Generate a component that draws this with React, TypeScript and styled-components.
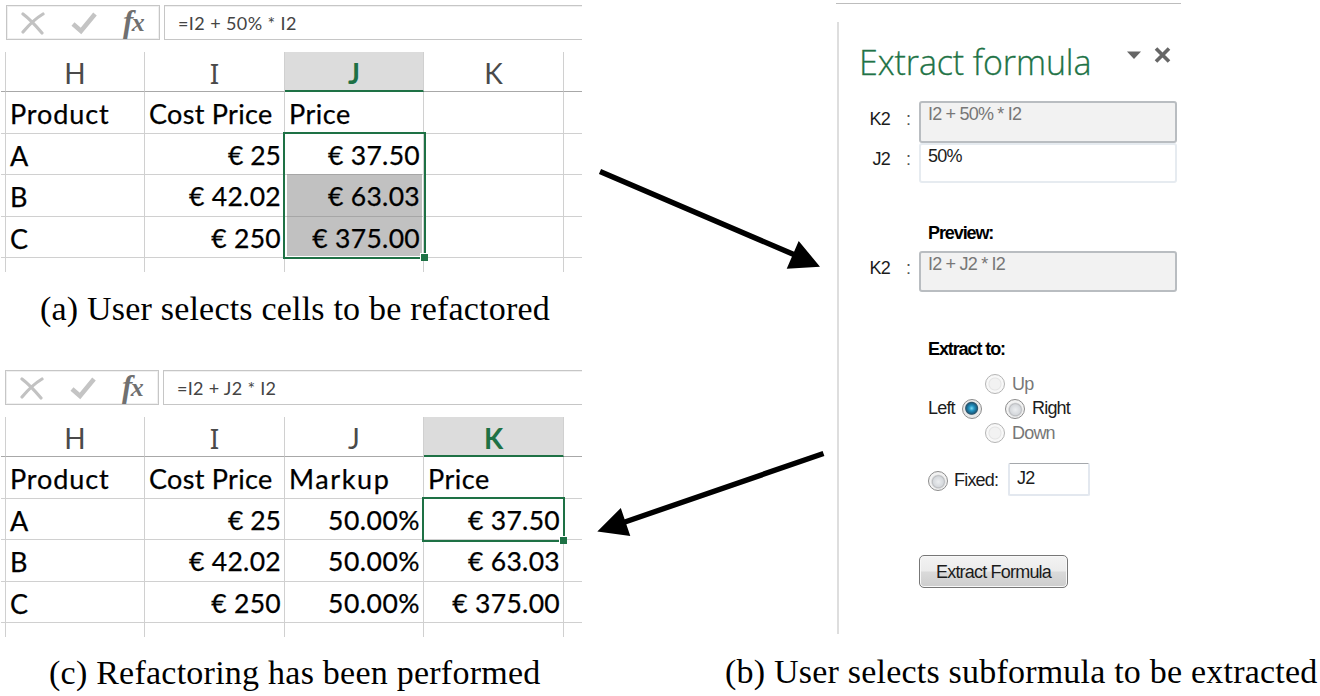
import React from "react";
import styled, { createGlobalStyle } from "styled-components";

const GlobalStyle = createGlobalStyle`
  *, *::before, *::after { box-sizing: border-box; }
  body { margin: 0; background: #fff; }
`;

const green = "#1e7145";

const Figure = styled.main`
  position: relative;
  display: grid;
  grid-template-columns: 582px 738px;
  width: 1320px;
  height: 696px;
  overflow: hidden;
  background: #fff;
  color: #000;
`;

const LeftColumn = styled.div`
  display: flex;
  flex-direction: column;
`;

const Caption = styled.p<{ $left: number; $top: number; $spacing: number }>`
  margin: ${(p) => p.$top}px 0 0 ${(p) => p.$left}px;
  font-family: "Liberation Serif", serif;
  font-size: 34px;
  line-height: 38px;
  letter-spacing: ${(p) => p.$spacing}px;
  white-space: nowrap;
`;

/* Spreadsheet */

const Sheet = styled.section<{ $top: number }>`
  margin-top: ${(p) => p.$top}px;
  font-family: Lato, sans-serif;
`;

const FormulaBar = styled.div<{ $left: number }>`
  display: flex;
  gap: 4px;
  height: 35px;
  margin-left: ${(p) => p.$left}px;
`;

const FormulaTools = styled.div`
  display: flex;
  align-items: center;
  width: 154px;
  border: 1px solid #c6c6c6;
  box-shadow: inset 0 0 0 1px #f0f0f0;
  padding-left: 13px;
`;

const CancelIcon = styled.svg`
  width: 26px;
  height: 24px;
`;

const AcceptIcon = styled.svg`
  width: 28px;
  height: 24px;
  margin-left: 24px;
`;

const Fx = styled.span`
  display: flex;
  margin: -1px 0 0 25px;
  font: italic bold 31px/34px "Liberation Serif", serif;
  letter-spacing: -1.5px;
  color: #707070;
`;

const FxSub = styled.span`
  margin-top: 1px;
  font-size: 26px;
`;

const FormulaText = styled.div<{ $spacing: number }>`
  flex: 1;
  border: 1px solid #c6c6c6;
  border-right: 0;
  box-shadow: inset 0 1px 0 #f0f0f0;
  padding-left: 13px;
  font-size: 18px;
  line-height: 34px;
  letter-spacing: ${(p) => p.$spacing}px;
  white-space: pre;
  color: #444;
`;

const Grid = styled.div`
  display: grid;
  grid-template-columns: 5px 139px 140px 139px 140px 18px;
  grid-template-rows: 40px 42px 41px 42px 41px 14px;
  margin: 12px 0 0 1px;
`;

const HeaderCell = styled.div<{ $active?: boolean; $serifI?: boolean; $last?: boolean }>`
  border-right: ${(p) => (p.$last ? 0 : "1px solid #d0d0d0")};
  border-bottom: ${(p) => (p.$active ? `2px solid ${green}` : "1px solid #a8a8a8")};
  background: ${(p) => (p.$active ? "#dcdcdc" : "#fff")};
  color: ${(p) => (p.$active ? green : "#4a4a4a")};
  font-family: ${(p) => (p.$serifI ? '"Noto Sans"' : "Lato")}, sans-serif;
  font-weight: ${(p) => (p.$active ? 700 : 400)};
  font-size: 28px;
  line-height: 43px;
  text-align: center;
`;

const Cell = styled.div<{ $right?: boolean; $edge?: boolean; $last?: boolean; $spacing?: number }>`
  position: relative;
  border-right: ${(p) => (p.$last ? 0 : "1px solid #d0d0d0")};
  border-bottom: 1px solid #d0d0d0;
  padding: ${(p) => (p.$edge ? 0 : p.$right ? "0 3px 0 4px" : "0 4px")};
  font-size: ${(p) => (p.$right ? 26.5 : 27)}px;
  line-height: 43px;
  -webkit-text-stroke: 0.25px #000;
  letter-spacing: ${(p) => p.$spacing ?? 0}px;
  text-align: ${(p) => (p.$right ? "right" : "left")};
  white-space: nowrap;
`;

const TailCell = styled.div<{ $last?: boolean }>`
  border-right: ${(p) => (p.$last ? 0 : "1px solid #d0d0d0")};
`;

const CellText = styled.span`
  position: relative;
  z-index: 3;
`;

const Shade = styled.div<{ $height: number }>`
  position: absolute;
  z-index: 1;
  left: 2px;
  right: 1px;
  top: -1px;
  height: ${(p) => p.$height}px;
  border-top: 1px solid #a6a6a6;
  background: #c1c1c1;
`;

const Selection = styled.div<{ $height: number }>`
  position: absolute;
  z-index: 2;
  left: -2px;
  top: -2px;
  width: 143px;
  height: ${(p) => p.$height}px;
  border: 2px solid ${green};
  &::after {
    content: "";
    position: absolute;
    right: -4px;
    bottom: -4px;
    width: 8px;
    height: 8px;
    border: 1px solid #fff;
    border-right: 0;
    border-bottom: 0;
    background: ${green};
  }
`;

type SheetCell = { text: string; spacing?: number; select?: number; shade?: number };

function Spreadsheet(props: {
  top: number;
  left: number;
  formula: string;
  spacing: number;
  active: string;
  rows: SheetCell[][];
}) {
  return (
    <Sheet $top={props.top}>
      <FormulaBar $left={props.left}>
        <FormulaTools>
          <CancelIcon viewBox="0 0 26 24">
            <path d="M3 3 Q11 9 22 22 M23 3 Q13 9 3 21" fill="none" stroke="#c2c2c2" strokeWidth="3.2" strokeLinecap="round" />
          </CancelIcon>
          <AcceptIcon viewBox="0 0 28 24">
            <path d="M3 13 L11 20 L25 3" fill="none" stroke="#c4c4c4" strokeWidth="4.6" />
          </AcceptIcon>
          <Fx>f<FxSub>x</FxSub></Fx>
        </FormulaTools>
        <FormulaText $spacing={props.spacing}>{props.formula}</FormulaText>
      </FormulaBar>
      <Grid>
        <HeaderCell />
        {["H", "I", "J", "K"].map((name) => (
          <HeaderCell key={name} $active={name === props.active} $serifI={name === "I"}>
            {name}
          </HeaderCell>
        ))}
        <HeaderCell $last />
        {props.rows.map((row, r) => (
          <React.Fragment key={r}>
            <Cell $edge />
            {row.map((cell, c) => (
              <Cell key={c} $right={r > 0 && c > 0} $spacing={cell.spacing ?? 0.3}>
                {cell.shade && <Shade $height={cell.shade} />}
                {cell.select && <Selection $height={cell.select} />}
                <CellText>{cell.text}</CellText>
              </Cell>
            ))}
            <Cell $edge $last />
          </React.Fragment>
        ))}
        <TailCell />
        <TailCell />
        <TailCell />
        <TailCell />
        <TailCell />
        <TailCell $last />
      </Grid>
    </Sheet>
  );
}

/* Task pane */

const RightColumn = styled.div`
  display: flex;
  flex-direction: column;
`;

const PaneFrame = styled.section`
  width: 345px;
  height: 631px;
  margin: 3px 0 0 254px;
  padding-top: 18px;
  border-top: 1px solid #bdbdbd;
`;

const Pane = styled.div`
  height: 612px;
  margin-left: 1px;
  border-left: 2px solid #dedede;
  padding-left: 21px;
  font-family: "Liberation Sans", sans-serif;
  font-size: 18px;
  letter-spacing: -0.8px;
  color: #1c1c1c;
`;

const PaneHeader = styled.header`
  display: flex;
  height: 79px;
`;

const PaneTitle = styled.h1`
  width: 267px;
  margin: 17px 0 0 -1px;
  font: 300 34px/46px "Open Sans", sans-serif;
  letter-spacing: -0.1px;
  -webkit-text-stroke: 0.3px #217346;
  white-space: nowrap;
  color: #217346;
`;

const PaneIcon = styled.svg<{ $width: number; $gap: number }>`
  width: ${(p) => p.$width}px;
  height: 18px;
  margin: 24px ${(p) => p.$gap}px 0 1px;
`;

const FieldRow = styled.div<{ $height: number }>`
  display: flex;
  height: ${(p) => p.$height}px;
`;

const FieldLabel = styled.span<{ $top?: number }>`
  width: 30px;
  padding-top: ${(p) => p.$top ?? 6}px;
  line-height: 22px;
  text-align: right;
`;

const Colon = styled.span<{ $top?: number }>`
  width: 29px;
  padding: ${(p) => p.$top ?? 6}px 0 0 16px;
  line-height: 22px;
  color: #555;
`;

const FieldBox = styled.div<{ $readOnly?: boolean }>`
  width: 258px;
  border: ${(p) => (p.$readOnly ? "2px solid #b9bdc1" : "2px solid #e6ebf0")};
  border-radius: 3px;
  background: ${(p) => (p.$readOnly ? "#f2f2f2" : "#fff")};
  padding-left: 7px;
  line-height: 22px;
  letter-spacing: -0.8px;
  color: ${(p) => (p.$readOnly ? "#777" : "#1c1c1c")};
`;

const SectionTitle = styled.h2<{ $top: number; $bottom: number }>`
  margin: ${(p) => p.$top}px 0 ${(p) => p.$bottom}px 68px;
  font-size: 18px;
  line-height: 22px;
  font-weight: 700;
  letter-spacing: -1.1px;
  color: #000;
`;

const OptionRow = styled.div<{ $left: number; $height: number; $top?: number; $muted?: boolean }>`
  display: flex;
  align-items: center;
  height: ${(p) => p.$height}px;
  margin: ${(p) => p.$top ?? 0}px 0 0 ${(p) => p.$left}px;
  color: ${(p) => (p.$muted ? "#777" : "#1c1c1c")};
`;

const OptionText = styled.span<{ $width: number }>`
  width: ${(p) => p.$width}px;
  margin-top: -1px;
  white-space: nowrap;
`;

const Radio = styled.span<{ $gap: number; $muted?: boolean; $checked?: boolean }>`
  width: 20px;
  height: 20px;
  margin: -1px ${(p) => p.$gap}px 0 0;
  border: 1.5px solid ${(p) => (p.$muted ? "#b4b4b4" : "#8c8c8c")};
  border-radius: 50%;
  background: ${(p) =>
    p.$checked
      ? "radial-gradient(circle at 48% 46%, #7fdcf5 0, #2596c4 2.5px, #1b6489 5px, #2d556b 6px, #e9e9e9 7px)"
      : p.$muted
        ? "radial-gradient(circle, #f2f2f2 0 5px, #e4e4e4 6px, #f8f8f8 7px)"
        : "radial-gradient(circle at 52% 54%, #eceef0 0, #d6d9dd 5px, #bcbec1 6px, #f2f2f2 7.5px)"};
`;

const CellInput = styled.div`
  width: 82px;
  height: 33px;
  border: 2px solid #e3e8ef;
  border-top: 1px solid #a5a8ac;
  border-radius: 2px;
  margin: -4px 0 0 -1px;
  padding: 3px 0 0 7px;
  line-height: 22px;
`;

const ExtractButton = styled.button`
  display: block;
  width: 149px;
  height: 33px;
  margin: 56px 0 0 59px;
  padding: 0;
  border: 1.5px solid #777;
  border-radius: 5px;
  background: linear-gradient(#f3f3f3 0, #ebebeb 48%, #dadada 52%, #cdcdcd 100%);
  box-shadow: inset 0 0 0 1px #f8f8f8;
  font: 18px/28px "Liberation Sans", sans-serif;
  letter-spacing: -0.8px;
  color: #1c1c1c;
`;

const Arrows = styled.svg`
  position: absolute;
  left: 590px;
  top: 160px;
  width: 240px;
  height: 390px;
`;

const sheetBefore: SheetCell[][] = [
  [{ text: "Product", spacing: 0.9 }, { text: "Cost Price", spacing: 0.3 }, { text: "Price", spacing: 0.5 }, { text: "" }],
  [{ text: "A" }, { text: "€ 25", spacing: 0 }, { text: "€ 37.50", select: 127 }, { text: "" }],
  [{ text: "B" }, { text: "€ 42.02" }, { text: "€ 63.03", shade: 42 }, { text: "" }],
  [{ text: "C" }, { text: "€ 250" }, { text: "€ 375.00", shade: 40 }, { text: "" }],
];

const sheetAfter: SheetCell[][] = [
  [
    { text: "Product", spacing: 0.9 },
    { text: "Cost Price", spacing: 0.3 },
    { text: "Markup", spacing: 1.6 },
    { text: "Price", spacing: 0.5 },
  ],
  [{ text: "A" }, { text: "€ 25", spacing: 0 }, { text: "50.00%", spacing: 0.5 }, { text: "€ 37.50", select: 45 }],
  [{ text: "B" }, { text: "€ 42.02" }, { text: "50.00%", spacing: 0.5 }, { text: "€ 63.03" }],
  [{ text: "C" }, { text: "€ 250" }, { text: "50.00%", spacing: 0.5 }, { text: "€ 375.00" }],
];

export default function App() {
  return (
    <Figure>
      <GlobalStyle />
      <LeftColumn>
        <Spreadsheet top={5} left={6} formula="=I2 + 50% * I2" spacing={0.4} active="J" rows={sheetBefore} />
        <Caption $left={40} $top={18} $spacing={0.2}>(a) User selects cells to be refactored</Caption>
        <Spreadsheet top={42} left={5} formula="=I2 + J2 * I2" spacing={0.3} active="K" rows={sheetAfter} />
        <Caption $left={49} $top={17} $spacing={0.24}>(c) Refactoring has been performed</Caption>
      </LeftColumn>
      <RightColumn>
        <PaneFrame>
          <Pane>
            <PaneHeader>
              <PaneTitle>Extract formula</PaneTitle>
              <PaneIcon $width={14} $gap={12} viewBox="0 0 14 18">
                <path d="M0 5.5H14L7 13Z" fill="#666" />
              </PaneIcon>
              <PaneIcon $width={17} $gap={0} viewBox="0 0 17 18">
                <path d="M2 2.5L15 15.5M15 2.5L2 15.5" stroke="#666" strokeWidth="3.6" />
              </PaneIcon>
            </PaneHeader>
            <FieldRow $height={42}>
              <FieldLabel $top={7}>K2</FieldLabel>
              <Colon $top={7}>:</Colon>
              <FieldBox $readOnly>I2 + 50% * I2</FieldBox>
            </FieldRow>
            <FieldRow $height={40}>
              <FieldLabel $top={5}>J2</FieldLabel>
              <Colon $top={5}>:</Colon>
              <FieldBox>50%</FieldBox>
            </FieldRow>
            <SectionTitle $top={39} $bottom={7}>Preview:</SectionTitle>
            <FieldRow $height={41}>
              <FieldLabel>K2</FieldLabel>
              <Colon>:</Colon>
              <FieldBox $readOnly>I2 + J2 * I2</FieldBox>
            </FieldRow>
            <SectionTitle $top={46} $bottom={12}>Extract to:</SectionTitle>
            <OptionRow $left={125} $height={25} $muted>
              <Radio $gap={7} $muted />
              <OptionText $width={40}>Up</OptionText>
            </OptionRow>
            <OptionRow $left={68} $height={24}>
              <OptionText $width={34}>Left</OptionText>
              <Radio $gap={23} $checked />
              <Radio $gap={7} />
              <OptionText $width={50}>Right</OptionText>
            </OptionRow>
            <OptionRow $left={125} $height={25} $muted>
              <Radio $gap={7} $muted />
              <OptionText $width={50}>Down</OptionText>
            </OptionRow>
            <OptionRow $left={68} $height={36} $top={17}>
              <Radio $gap={6} />
              <OptionText $width={55}>Fixed:</OptionText>
              <CellInput>J2</CellInput>
            </OptionRow>
            <ExtractButton>Extract Formula</ExtractButton>
          </Pane>
        </PaneFrame>
        <Caption $left={143} $top={19} $spacing={0.21}>(b) User selects subformula to be extracted</Caption>
      </RightColumn>
      <Arrows viewBox="590 160 240 390">
        <path d="M600 171.5L795 255M823.5 453.5L622 523" stroke="#000" strokeWidth="5.4" />
        <path d="M820 266.7L798.7 241L786.7 268.8ZM597.3 531.5L620.8 508L630.3 536Z" />
      </Arrows>
    </Figure>
  );
}
